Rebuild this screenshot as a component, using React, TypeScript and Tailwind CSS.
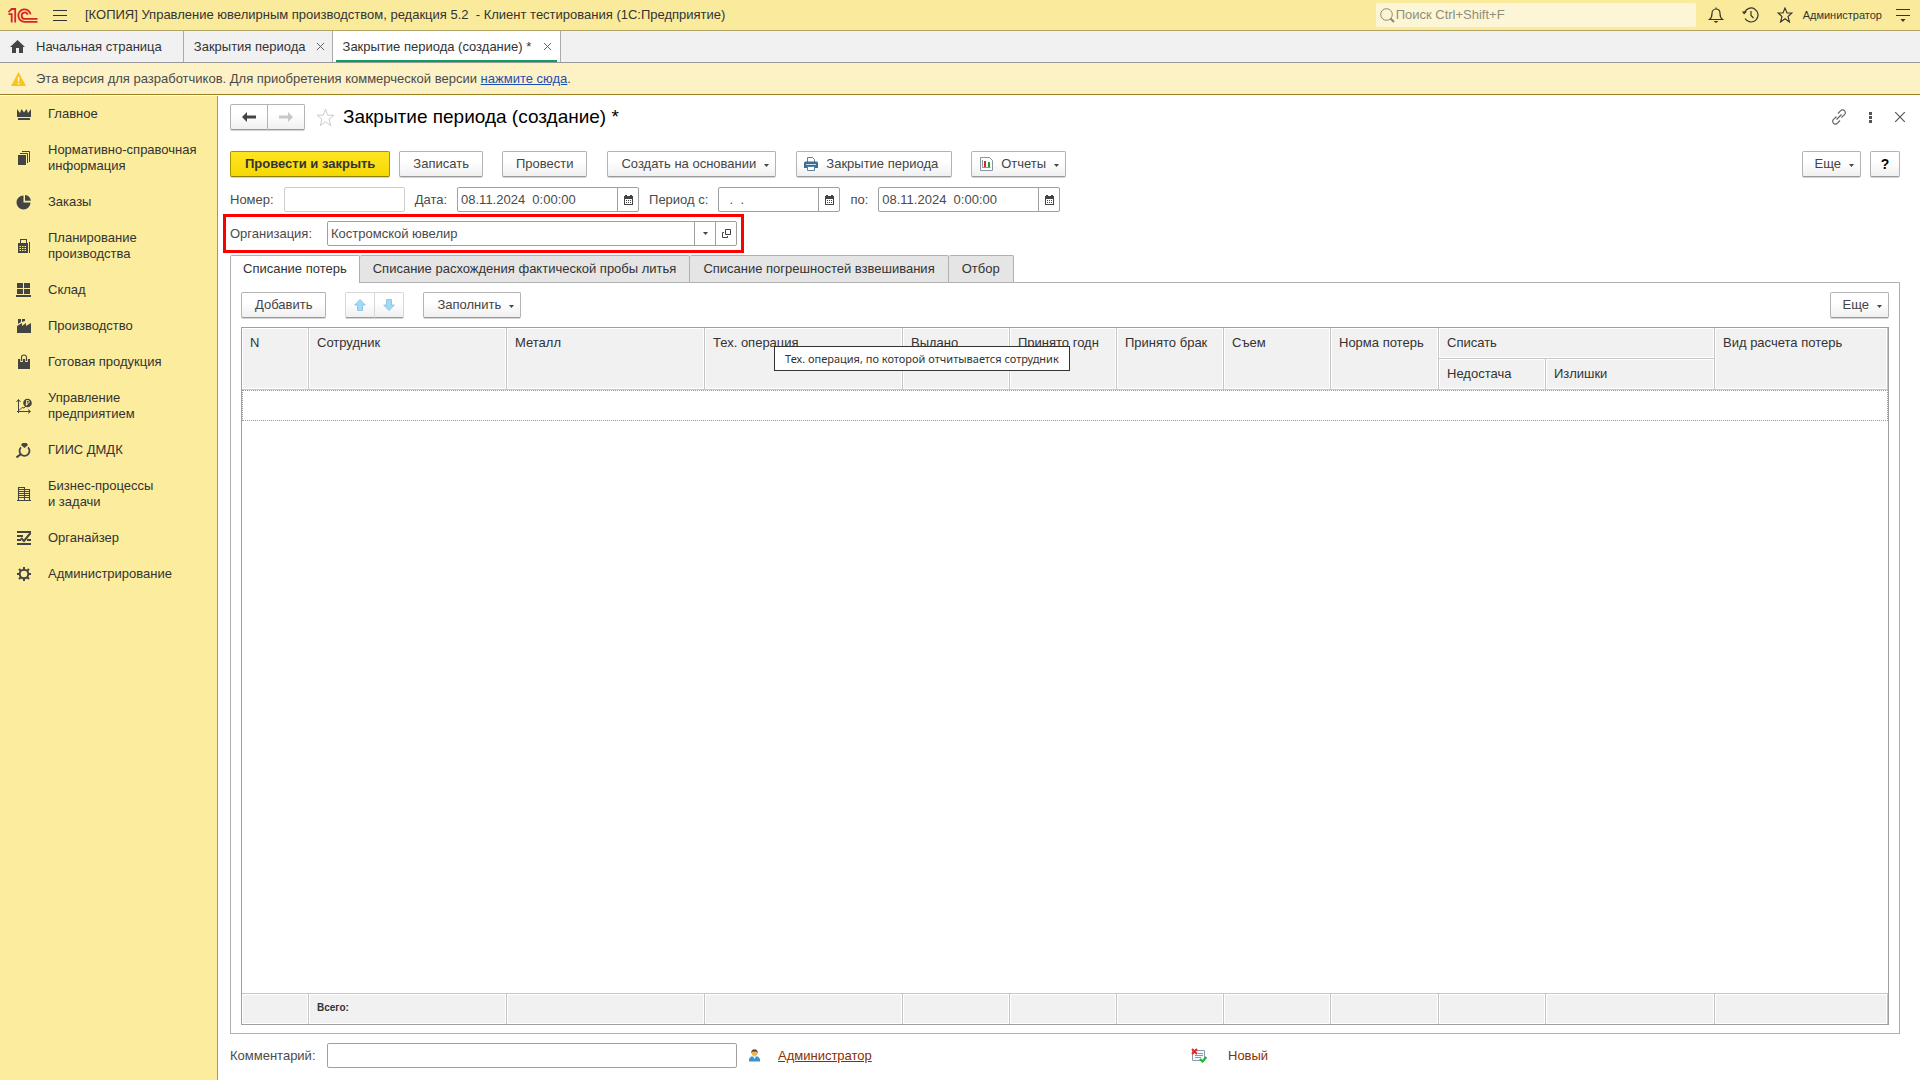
import type { ReactNode } from 'react';

const buttonBase =
  'flex h-[26px] items-center justify-center rounded-xs border border-[#b3b3b3] border-b-[#9a9a9a] bg-linear-to-b from-white from-40% to-[#f0f0f0] text-[#444] shadow-[0_1px_0_#d4d4d4] whitespace-nowrap';

const fieldBase = 'h-[25px] rounded-xs border border-[#a0a0a0] bg-white';

function Caret({ className = '' }: { className?: string }) {
  return (
    <svg className={className} width="5" height="3" viewBox="0 0 5 3" fill="#444" aria-hidden="true">
      <path d="M0 0h5L2.5 3z" />
    </svg>
  );
}

function CalendarIcon() {
  return (
    <svg width="9" height="10" viewBox="0 0 9 10" fill="#444" aria-hidden="true">
      <path d="M0 1h1V0h2v1h3V0h2v1h1v9H0zM1 4v5h7V4z" fillRule="evenodd" />
      <path d="M2 5h1v1H2zM4 5h1v1H4zM6 5h1v1H6zM2 7h1v1H2zM4 7h1v1H4zM6 7h1v1H6z" />
    </svg>
  );
}

function CloseIcon({ size = 9 }: { size?: number }) {
  return (
    <svg width={size} height={size} viewBox="0 0 10 10" stroke="#555" strokeWidth="1" aria-hidden="true">
      <path d="M1 1l8 8M9 1L1 9" />
    </svg>
  );
}

function Logo() {
  return (
    <svg width="30" height="15" viewBox="0 0 30 15" fill="none" stroke="#d8232a" strokeWidth="1.8" aria-label="1C">
      <path d="M0.5 4.2L3.6 1h3.6v13.5" />
      <path d="M0.5 6.2h3.2v8.3" />
      <path d="M22.6 6.4A6.2 6.2 0 1 0 16.8 13.8H29.5" />
      <path d="M19.8 6.6A3.2 3.2 0 1 0 16.8 10.9H29.5" />
    </svg>
  );
}

const menu: { label: string[]; icon: ReactNode }[] = [
  {
    label: ['Главное'],
    icon: (
      <>
        <path d="M1 3l3 4 1.500-4L8 6.500 10.500 3 12 7l3-4v8H1z" />
        <path d="M2 12h12v2H2z" />
      </>
    ),
  },
  {
    label: ['Нормативно-справочная', 'информация'],
    icon: (
      <>
        <path d="M2 5h8v10H2z" />
        <path d="M4 3.500h7.500V13M6 1.500h7.500V12" fill="none" stroke="#444" />
      </>
    ),
  },
  {
    label: ['Заказы'],
    icon: (
      <>
        <path d="M7.500 1.500v7h7A7 7 0 1 1 7.500 1.500z" />
        <path d="M9 1a6.500 6.500 0 0 1 5.800 5.800H9z" />
      </>
    ),
  },
  {
    label: ['Планирование', 'производства'],
    icon: (
      <>
        <path d="M2 5h2V1h7v4h1v10H2zM5 2v3h5V2zM3.500 8v1H5V8zm2.500 0v1h1.500V8zm2.500 0v1H10V8zM3.500 10v1H5v-1zm2.500 0v1h1.500v-1zm2.500 0v1H10v-1zM3.500 12v1H5v-1zm2.500 0v1h1.500v-1zm2.500 0v1H10v-1z" fillRule="evenodd" />
        <path d="M13 4h1v11h-1z" />
      </>
    ),
  },
  {
    label: ['Склад'],
    icon: <path d="M1 1h6v5H1zM8 1h6v5H8zM1 7h6v5H1zM8 7h6v5H8zM0 13h15v2H0z" />,
  },
  {
    label: ['Производство'],
    icon: (
      <>
        <path d="M1 15V8l5-3v3l4-3v3l5-3v10z" />
        <path d="M2 1h3v3L2 6zM6 1h3v2L6 4z" />
      </>
    ),
  },
  {
    label: ['Готовая продукция'],
    icon: (
      <>
        <path d="M2 5h12v10H2z" />
        <path d="M5.500 8V4a2.500 2.500 0 0 1 5 0v4" fill="none" stroke="#fbec9e" strokeWidth="2.600" />
        <path d="M5.500 7V3.500a2.500 2.500 0 0 1 5 0V7" fill="none" stroke="#444" strokeWidth="1.100" />
      </>
    ),
  },
  {
    label: ['Управление', 'предприятием'],
    icon: (
      <>
        <path d="M2.500 15V2M0.500 4l2-2.500 2 2.500M1 13.500h13M12 11.500l2.500 2-2.500 2M3 12.500l3-3 2 .500 2-2" fill="none" stroke="#444" />
        <circle cx="11.500" cy="5" r="4.300" />
        <path d="M10.500 7.500v-5h1.500a1.300 1.300 0 0 1 0 2.600h-2M9.500 6.300H12" fill="none" stroke="#fbec9e" strokeWidth=".900" />
      </>
    ),
  },
  {
    label: ['ГИИС ДМДК'],
    icon: (
      <>
        <path d="M5 3l1.500-2h4L12 3 8.500 6z" />
        <path d="M5 5.300a5 5 0 1 0 7 0" fill="none" stroke="#444" strokeWidth="1.800" />
        <path d="M5 12l-4.500 3.500" stroke="#444" strokeWidth="2" />
      </>
    ),
  },
  {
    label: ['Бизнес-процессы', 'и задачи'],
    icon: (
      <path
        d="M1 14.500h14M2.500 14V1.500h6V14M8.500 3.500h5V14M2.500 3.500h6M2.500 5.500h11M2.500 7.500h11M2.500 9.500h11M2.500 11.500h11"
        fill="none"
        stroke="#444"
        strokeWidth="1.100"
      />
    ),
  },
  {
    label: ['Органайзер'],
    icon: (
      <>
        <path d="M1 1h14v2H1zM1 5h6v2H1zM1 9h4v2H1zM11 9h4v2h-4zM1 13h14v2H1z" />
        <path d="M5 8l3 3 6.500-8" fill="none" stroke="#444" strokeWidth="2" />
      </>
    ),
  },
  {
    label: ['Администрирование'],
    icon: (
      <>
        <circle cx="8" cy="8" r="4.300" fill="none" stroke="#444" strokeWidth="2" />
        <path d="M8 1v2.500M8 12.500V15M1 8h2.500M12.500 8H15M3 3l1.800 1.800M11.200 11.200L13 13M13 3l-1.800 1.800M4.800 11.200L3 13" stroke="#444" strokeWidth="2" />
      </>
    ),
  },
];

const formTabs = ['Списание потерь', 'Списание расхождения фактической пробы литья', 'Списание погрешностей взвешивания', 'Отбор'];

const columnWidths = ['w-[67px]', 'w-[198px]', 'w-[198px]', 'w-[198px]', 'w-[107px]', 'w-[107px]', 'w-[107px]', 'w-[107px]', 'w-[108px]', 'w-[107px]', 'w-[169px]', ''];

const headCell =
  'border-r border-b border-[#c6c6c6] bg-[#f1f1f1] px-2 pt-[7px] text-left align-top font-normal leading-4 whitespace-nowrap shadow-[inset_0_0_0_1px_#fff]';

function TopBar() {
  return (
    <header className="flex h-[31px] items-center border-b border-[#b0a566] bg-[#faeb9c] pl-2 text-[#333]">
      <Logo />
      <button type="button" aria-label="Меню" className="ml-[15px]">
        <svg width="14" height="11" viewBox="0 0 14 11" stroke="#333" aria-hidden="true">
          <path d="M0 .5h14M0 5.500h14M0 10.500h14" />
        </svg>
      </button>
      <h1 className="ml-[18px] grow whitespace-pre">
        [КОПИЯ] Управление ювелирным производством, редакция 5.2{'  '}- Клиент тестирования (1С:Предприятие)
      </h1>
      <label className="flex h-6 w-80 items-center rounded-xs bg-[#fdf6d6] pl-1">
        <svg width="15" height="15" viewBox="0 0 15 15" fill="none" stroke="#8b866e" aria-hidden="true">
          <circle cx="6.500" cy="6.500" r="5.800" />
          <path d="M10.500 10.500l3.500 3.500" strokeWidth="2" />
        </svg>
        <input type="search" aria-label="Поиск" placeholder="Поиск Ctrl+Shift+F" className="ml-px grow bg-transparent outline-none placeholder:text-[#918d79]" />
      </label>
      <div className="ml-3 flex items-center gap-[18px]">
        <button type="button" aria-label="Уведомления">
          <svg width="16" height="16" viewBox="0 0 16 16" fill="none" stroke="#333" strokeWidth="1.200" aria-hidden="true">
            <path d="M1.500 12.500c2-1.500 2.500-3 2.500-6 0-2.500 1.500-4.500 4-4.500s4 2 4 4.500c0 3 .5 4.500 2.500 6zM8 .5V2" />
            <path d="M5.500 14h5l-2.500 2z" fill="#333" stroke="none" />
          </svg>
        </button>
        <button type="button" aria-label="История">
          <svg width="17" height="16" viewBox="0 0 17 16" fill="none" stroke="#333" strokeWidth="1.200" aria-hidden="true">
            <path d="M2.500 5.500A7 7 0 1 1 3 11.500M9 4v4.500l2.500 2.500" />
            <path d="M0 4.500h5L2 7.500z" fill="#333" stroke="none" />
          </svg>
        </button>
        <button type="button" aria-label="Избранное">
          <svg width="16" height="16" viewBox="0 0 16 16" fill="none" stroke="#333" strokeWidth="1.100" aria-hidden="true">
            <path d="M8 1l2 5h5l-4 3.500L12.500 15 8 11.700 3.500 15 5 9.500 1 6h5z" />
          </svg>
        </button>
      </div>
      <a href="#user" className="ml-2.5 text-[11px]">Администратор</a>
      <button type="button" aria-label="Настройки" className="mr-2.5 ml-3.5">
        <svg width="14" height="13" viewBox="0 0 14 13" aria-hidden="true">
          <path d="M0 .5h14M0 6.500h14" stroke="#333" />
          <path d="M4.500 10h5L7 13z" fill="#333" />
        </svg>
      </button>
    </header>
  );
}

function WindowTabs() {
  return (
    <nav className="flex h-8 border-b border-[#999] bg-[#f1f1f1] text-[#333]">
      <a href="#home" className="flex items-center border-r border-[#aaa] pr-[21px] pl-2.5">
        <svg width="15" height="13" viewBox="0 0 15 13" fill="#444" aria-hidden="true">
          <path d="M7.500 0L15 7h-2v6H9V8H6v5H2V7H0L3 4.200z" />
        </svg>
        <span className="ml-[11px]">Начальная страница</span>
      </a>
      <div className="flex items-center border-r border-[#aaa] pr-[7px] pl-2.5">
        <a href="#list">Закрытия периода</a>
        <button type="button" aria-label="Закрыть вкладку" className="ml-2.5"><CloseIcon /></button>
      </div>
      <div className="flex items-center border-r border-[#aaa] bg-white px-[3px]">
        <div className="flex h-full items-center border-b-2 border-[#0f9d58] px-[5px] pt-0.5 shadow-[inset_0_-2px_0_#fff]">
          <a href="#new" className="ml-0.5">Закрытие периода (создание) *</a>
          <button type="button" aria-label="Закрыть вкладку" className="ml-3"><CloseIcon /></button>
        </div>
      </div>
    </nav>
  );
}

function DateField({ id, label, value, width }: { id: string; label: string; value: string; width: string }) {
  return (
    <div className="flex items-center gap-2.5">
      <label htmlFor={id}>{label}</label>
      <div className={`flex ${fieldBase} ${width}`}>
        <input id={id} type="text" defaultValue={value} className="w-0 grow px-[3px] outline-none" />
        <button type="button" aria-label="Выбрать дату" className="flex w-[21px] items-center justify-center border-l border-[#a0a0a0]">
          <CalendarIcon />
        </button>
      </div>
    </div>
  );
}

function LossTable() {
  return (
    <table className="h-full w-full table-fixed border-separate border-spacing-0 border border-[#a0a0a0] text-[#333]">
      <colgroup>
        {columnWidths.map((width, i) => (
          <col key={i} className={width} />
        ))}
      </colgroup>
      <thead>
        <tr className="h-[31px]">
          <th rowSpan={2} className={headCell}>N</th>
          <th rowSpan={2} className={headCell}>Сотрудник</th>
          <th rowSpan={2} className={headCell}>Металл</th>
          <th rowSpan={2} className={`relative ${headCell}`}>
            Тех. операция
            <div role="tooltip" className="absolute top-[18px] left-[69px] z-10 flex h-[25px] items-center border border-[#333] bg-white px-2.5 font-['Noto_Sans',sans-serif] text-[11px]">
              Тех. операция, по которой отчитывается сотрудник
            </div>
          </th>
          <th rowSpan={2} className={headCell}>Выдано</th>
          <th rowSpan={2} className={headCell}>Принято годн</th>
          <th rowSpan={2} className={headCell}>Принято брак</th>
          <th rowSpan={2} className={headCell}>Съем</th>
          <th rowSpan={2} className={headCell}>Норма потерь</th>
          <th colSpan={2} className={headCell}>Списать</th>
          <th rowSpan={2} className={headCell}>Вид расчета потерь</th>
        </tr>
        <tr className="h-[31px]">
          <th className={headCell}>Недостача</th>
          <th className={headCell}>Излишки</th>
        </tr>
      </thead>
      <tbody>
        <tr className="h-[31px]">
          <td colSpan={12} className="border border-dotted border-[#999]" />
        </tr>
        <tr>
          <td colSpan={12} />
        </tr>
      </tbody>
      <tfoot>
        <tr className="h-[31px] text-[10px] font-bold">
          {columnWidths.map((_, i) => (
            <td key={i} className="border-t border-r border-[#c6c6c6] bg-[#f1f1f1] px-2 pb-0.5 shadow-[inset_0_0_0_1px_#fff]">
              {i === 1 && 'Всего:'}
            </td>
          ))}
        </tr>
      </tfoot>
    </table>
  );
}

export default function App() {
  return (
    <div className="flex h-screen flex-col bg-white font-['Liberation_Sans',Arial,sans-serif] text-[13px] leading-4 text-[#4a4a4a]">
      <TopBar />
      <WindowTabs />

      {/* Developer version notice */}
      <div className="flex h-8 items-center border-b border-[#9a7f1e] bg-[#fdf1c6] pl-[11px]">
        <svg width="15" height="14" viewBox="0 0 15 14" aria-hidden="true">
          <path d="M7.500 0L15 14H0z" fill="#f9c51d" />
          <path d="M6.800 5h1.500v4.500H6.800zM6.800 10.700h1.500v1.500H6.800z" fill="#fff" />
        </svg>
        <p className="ml-2.5">
          Эта версия для разработчиков. Для приобретения коммерческой версии{' '}
          <a href="#buy" className="text-[#1a4fb5] underline">нажмите сюда</a>.
        </p>
      </div>

      <div className="flex min-h-0 grow pt-px">
        <nav className="w-[218px] shrink-0 border-r border-[#a39a63] bg-[#fbec9e] text-[#333]">
          {menu.map((item) => (
            <a key={item.label[0]} href="#section" className="flex items-center gap-4 py-2.5 pl-4">
              <svg className="shrink-0" width="16" height="16" viewBox="0 0 16 16" fill="#444" aria-hidden="true">
                {item.icon}
              </svg>
              <span>
                {item.label.map((line) => (
                  <span key={line} className="block">{line}</span>
                ))}
              </span>
            </a>
          ))}
        </nav>

        <main className="flex min-w-0 grow flex-col pt-2 pr-5 pb-3 pl-3">
          {/* Form title */}
          <div className="flex items-center">
            <div className="flex">
              <button type="button" aria-label="Назад" className={`${buttonBase} w-[38px] rounded-r-none`}>
                <svg width="14" height="10" viewBox="0 0 14 10" fill="#444" aria-hidden="true">
                  <path d="M0 5l5-5v3.500h9v3H5V10z" />
                </svg>
              </button>
              <button type="button" aria-label="Вперед" className={`${buttonBase} w-[37px] rounded-l-none border-l-0`}>
                <svg width="14" height="10" viewBox="0 0 14 10" fill="#c8c8c8" aria-hidden="true">
                  <path d="M14 5L9 0v3.500H0v3h9V10z" />
                </svg>
              </button>
            </div>
            <button type="button" aria-label="В избранное" className="ml-[11px]">
              <svg width="19" height="19" viewBox="0 0 19 19" fill="none" stroke="#ccc" aria-hidden="true">
                <path d="M9.500 1l2.200 6.200H18l-5 4 1.800 6.500-5.300-4-5.300 4L6 11.200l-5-4h6.300z" />
              </svg>
            </button>
            <h2 className="ml-2 grow text-[19px] leading-6 text-black">Закрытие периода (создание) *</h2>
            <div className="-mr-1.5 flex items-center gap-[22px]">
              <button type="button" aria-label="Ссылка">
                <svg width="16" height="16" viewBox="0 0 16 16" fill="none" stroke="#666" strokeWidth="1.200" aria-hidden="true">
                  <path d="M7 4.500l2.500-2.700a2.700 2.700 0 0 1 4.700 1.200c.3 1-.1 2-.7 2.600L10.500 8.500M9 11.500l-2.500 2.700A2.700 2.700 0 0 1 1.800 13c-.3-1 .1-2 .7-2.600L5.500 7.500M5.500 10.500l5-5" />
                </svg>
              </button>
              <button type="button" aria-label="Дополнительно">
                <svg width="3" height="11" viewBox="0 0 3 11" fill="#555" aria-hidden="true">
                  <path d="M0 0h3v3H0zM0 4h3v3H0zM0 8h3v3H0z" />
                </svg>
              </button>
              <button type="button" aria-label="Закрыть"><CloseIcon size={12} /></button>
            </div>
          </div>

          {/* Commands */}
          <div className="mt-[21px] flex items-center">
            <button type="button" className="flex h-[26px] items-center rounded-xs border border-[#a89400] border-b-[#8f7e00] bg-linear-to-b from-[#ffe51f] to-[#f5d800] px-3.5 font-bold text-[#333] shadow-[0_1px_0_#d4d4d4]">
              Провести и закрыть
            </button>
            <button type="button" className={`${buttonBase} ml-[9px] px-[13px]`}>Записать</button>
            <button type="button" className={`${buttonBase} ml-[19px] px-[13px]`}>Провести</button>
            <button type="button" className={`${buttonBase} ml-5 gap-2 pr-1.5 pl-[13px]`}>
              Создать на основании <Caret className="mt-0.5" />
            </button>
            <button type="button" className={`${buttonBase} ml-5 gap-2 pr-[13px] pl-[7px]`}>
              <svg width="14" height="14" viewBox="0 0 14 14" aria-hidden="true">
                <path d="M3.500 5V.5h5L10.500 2.500V5" fill="#fff" stroke="#5c7f9e" />
                <path d="M1 4.500h12l1 1V11H0V5.500z" fill="#3d6c94" />
                <path d="M2 7h10v1H2z" fill="#c9dcea" />
                <path d="M3.500 9.500h7v4h-7z" fill="#fff" stroke="#5c7f9e" />
              </svg>
              Закрытие периода
            </button>
            <button type="button" className={`${buttonBase} ml-[19px] gap-2 pr-1.5 pl-2`}>
              <svg width="13" height="14" viewBox="0 0 13 14" aria-hidden="true">
                <path d="M.5.5h9l3 3v10H.5z" fill="#fff" stroke="#8795a3" />
                <path d="M2.500 3v7.500h8" fill="none" stroke="#8795a3" />
                <path d="M4 4h2v6H4z" fill="#d9262b" />
                <path d="M8 5h2v5H8z" fill="#1f9e38" />
              </svg>
              <span className="flex items-center gap-2">Отчеты <Caret className="mt-0.5" /></span>
            </button>
            <button type="button" className={`${buttonBase} ml-auto gap-2 pr-1.5 pl-3`}>
              Еще <Caret className="mt-0.5" />
            </button>
            <button type="button" aria-label="Справка" className={`${buttonBase} ml-[9px] w-[30px] text-sm font-bold text-black`}>?</button>
          </div>

          {/* Document fields */}
          <div className="mt-2.5 flex items-center gap-2.5">
            <div className="flex items-center gap-2.5">
              <label htmlFor="number">Номер:</label>
              <input id="number" type="text" className="h-[25px] w-[121px] rounded-xs border border-[#ccc] px-[3px] outline-none" />
            </div>
            <DateField id="date" label="Дата:" value="08.11.2024  0:00:00" width="w-[182px]" />
            <DateField id="from" label="Период с:" value="  .  ." width="w-[122px]" />
            <DateField id="to" label="по:" value="08.11.2024  0:00:00" width="w-[182px]" />
          </div>

          <div className="mt-0.5 -ml-[7px] flex w-[521px] items-center border-3 border-[#f00] p-1">
            <label htmlFor="organization" className="w-[97px]">Организация:</label>
            <div className={`flex grow ${fieldBase}`}>
              <input id="organization" type="text" defaultValue="Костромской ювелир" className="w-0 grow px-[3px] outline-none" />
              <button type="button" aria-label="Выбрать" className="flex w-[21px] items-center justify-center border-l border-[#a0a0a0]">
                <Caret />
              </button>
              <button type="button" aria-label="Открыть" className="flex w-[21px] items-center justify-center border-l border-[#a0a0a0]">
                <svg width="9" height="9" viewBox="0 0 9 9" fill="none" stroke="#444" aria-hidden="true">
                  <path d="M3.500.5h5v5h-5zM2 3.500H.5v5h5V7" />
                </svg>
              </button>
            </div>
          </div>

          {/* Form pages */}
          <div role="tablist" className="mt-0.5 flex">
            {formTabs.map((tab, i) => (
              <button
                key={tab}
                type="button"
                role="tab"
                aria-selected={i === 0}
                className={
                  i === 0
                    ? 'relative z-10 -mb-px h-7 rounded-t-xs border border-b-0 border-[#b0b0b0] bg-white px-3 pb-0.5 text-[#333]'
                    : 'h-[27px] rounded-t-xs border border-b-0 border-l-0 border-[#b0b0b0] bg-[#e5e5e5] px-[13px] text-[#333]'
                }
              >
                {tab}
              </button>
            ))}
          </div>
          <section className="flex min-h-0 grow flex-col border border-[#b0b0b0] px-2.5 pt-[9px] pb-2">
            <div className="flex">
              <button type="button" className={`${buttonBase} px-[13px]`}>Добавить</button>
              <div className="ml-[19px] flex">
                <button type="button" aria-label="Вверх" className={`${buttonBase} w-[30px] rounded-r-none border-[#d8d8d8]`}>
                  <svg width="12" height="12" viewBox="0 0 12 12" fill="#a5d8f3" stroke="#7fbfe0" strokeWidth=".8" aria-hidden="true">
                    <path d="M6 .5l5.300 5.500H8.500v5.500h-5V6H.7z" />
                  </svg>
                </button>
                <button type="button" aria-label="Вниз" className={`${buttonBase} w-[29px] rounded-l-none border-l-0 border-[#d8d8d8]`}>
                  <svg width="12" height="12" viewBox="0 0 12 12" fill="#a5d8f3" stroke="#7fbfe0" strokeWidth=".8" aria-hidden="true">
                    <path d="M6 11.500L.7 6h2.800V.5h5V6h2.800z" />
                  </svg>
                </button>
              </div>
              <button type="button" className={`${buttonBase} ml-[19px] gap-2 pr-1.5 pl-[13px]`}>
                Заполнить <Caret className="mt-0.5" />
              </button>
              <button type="button" className={`${buttonBase} ml-auto gap-2 pr-1.5 pl-3`}>
                Еще <Caret className="mt-0.5" />
              </button>
            </div>
            <div className="mt-[9px] min-h-0 grow">
              <LossTable />
            </div>
          </section>

          {/* Footer */}
          <div className="mt-[9px] flex items-center">
            <label htmlFor="comment" className="w-[97px]">Комментарий:</label>
            <input id="comment" type="text" className={`${fieldBase} w-[410px] px-[3px] outline-none`} />
            <svg className="ml-3" width="11" height="13" viewBox="0 0 11 13" aria-hidden="true">
              <path d="M0 12.500V10l2-2.500h7L11 10v2.500z" fill="#3a93c9" />
              <path d="M4 7.500h3L5.500 10z" fill="#fff" />
              <circle cx="5.500" cy="4" r="3" fill="#f0b35a" />
              <path d="M2.300 4V2.500L4 .5h3l1.700 2V4L7.500 2.500h-4z" fill="#4b3a2b" />
            </svg>
            <a href="#author" className="ml-[18px] w-[413px] text-[#8b2f00] underline">Администратор</a>
            <svg width="16" height="15" viewBox="0 0 16 15" aria-hidden="true">
              <path d="M1.500 2.500h12v10h-12z" fill="#f4f7fa" stroke="#8a9bb0" />
              <path d="M7 5.500h5M4 7.500h8M4 9.500h6" stroke="#8a9bb0" />
              <path d="M1 1l5 5M6 1L1 6" stroke="#dc2a2a" strokeWidth="2" />
              <path d="M9 11l2.500 2.500L15.500 9" fill="none" stroke="#23b33a" strokeWidth="2.200" />
            </svg>
            <span className="ml-[21px] text-[#8b2f00]">Новый</span>
          </div>
        </main>
      </div>
    </div>
  );
}
